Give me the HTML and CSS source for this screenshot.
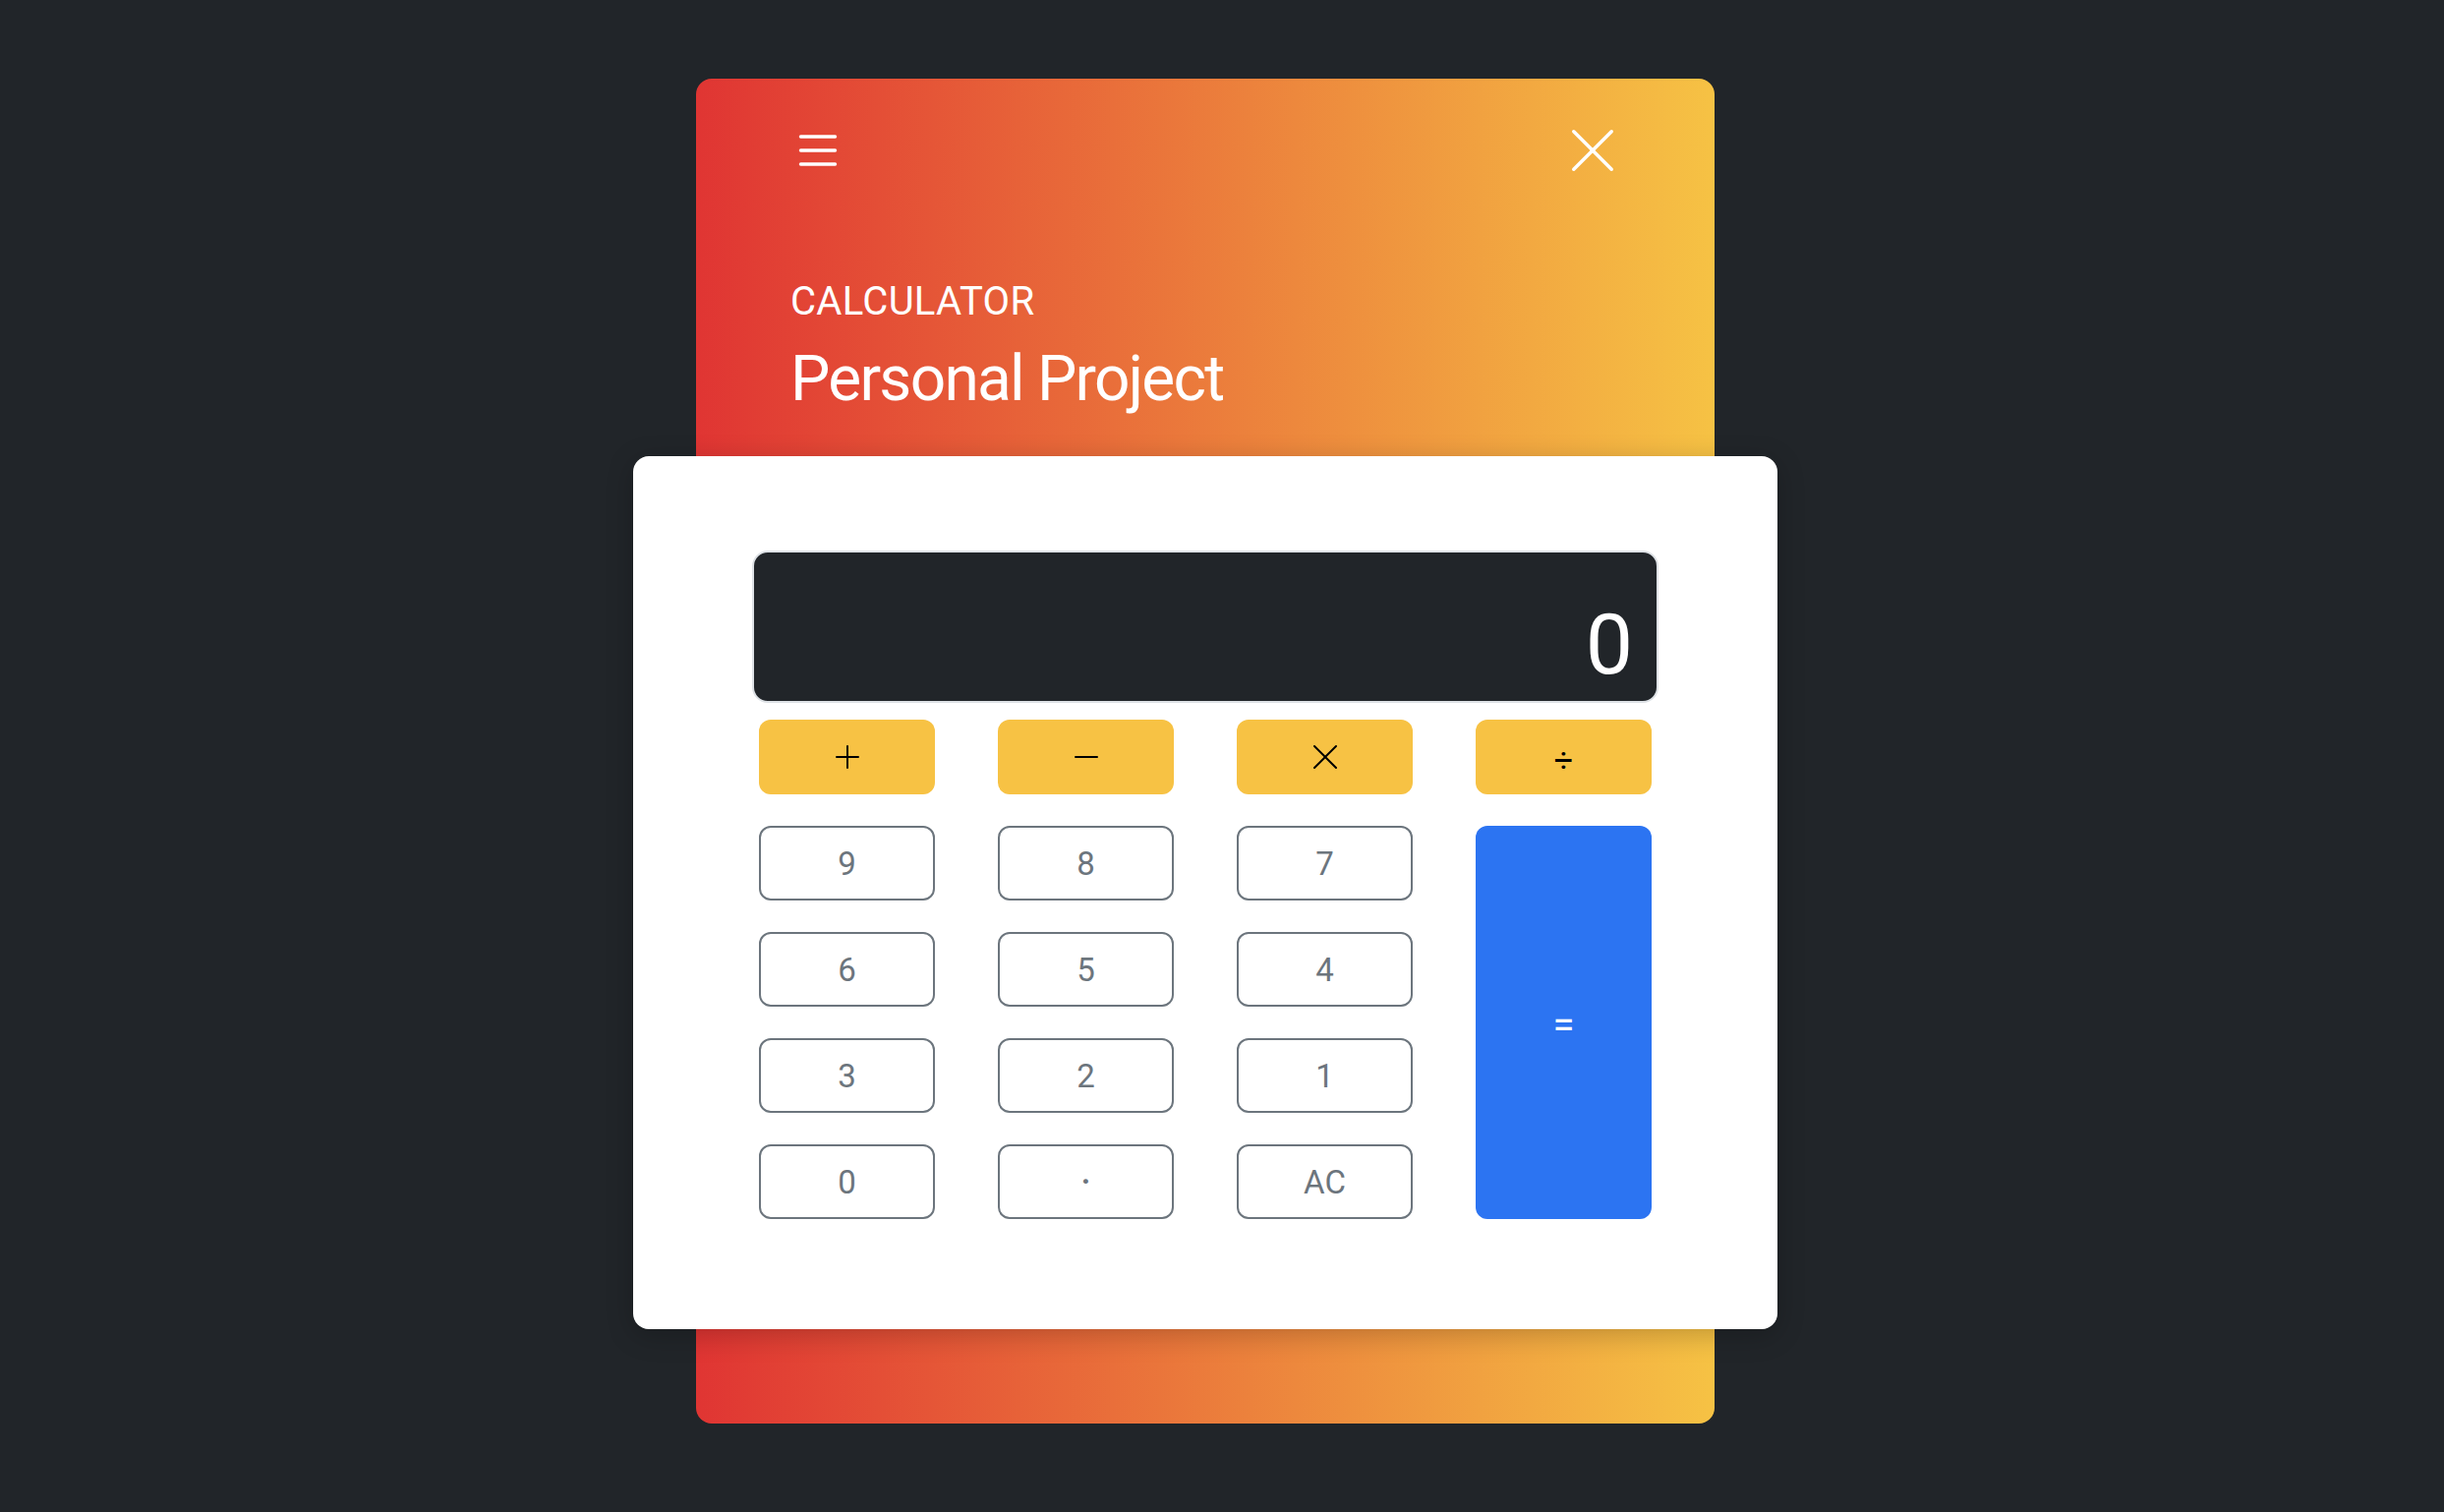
FILE: index.html
```html
<!DOCTYPE html>
<html lang="en">
<head>
<meta charset="utf-8">
<title>Calculator - Personal Project</title>
<link rel="stylesheet" href="styles.css">
</head>
<body>
<div class="stage">
  <section class="panel">
    <header class="hero">
      <div class="hero-bar">
        <svg class="hero-icon" viewBox="0 0 16 16" aria-label="Menu"><path d="M2.5 12a.5.5 0 0 1 .5-.5h10a.5.5 0 0 1 0 1H3a.5.5 0 0 1-.5-.5m0-4a.5.5 0 0 1 .5-.5h10a.5.5 0 0 1 0 1H3a.5.5 0 0 1-.5-.5m0-4a.5.5 0 0 1 .5-.5h10a.5.5 0 0 1 0 1H3a.5.5 0 0 1-.5-.5"/></svg>
        <svg class="hero-icon" viewBox="0 0 16 16" aria-label="Close"><path d="M2.146 2.854a.5.5 0 1 1 .708-.708L8 7.293l5.146-5.147a.5.5 0 0 1 .708.708L8.707 8l5.147 5.146a.5.5 0 0 1-.708.708L8 8.707l-5.146 5.147a.5.5 0 0 1-.708-.708L7.293 8z"/></svg>
      </div>
      <h5 class="eyebrow">CALCULATOR</h5>
      <h2 class="title">Personal Project</h2>
    </header>

    <div class="calc">
      <div class="screen"><span class="screen-value">0</span></div>
      <div class="keys">
        <button class="key op"><svg viewBox="0 0 16 16"><path d="M8 2a.5.5 0 0 1 .5.5v5h5a.5.5 0 0 1 0 1h-5v5a.5.5 0 0 1-1 0v-5h-5a.5.5 0 0 1 0-1h5v-5A.5.5 0 0 1 8 2"/></svg></button>
        <button class="key op"><svg viewBox="0 0 16 16"><path d="M2 8a.5.5 0 0 1 .5-.5h11a.5.5 0 0 1 0 1h-11A.5.5 0 0 1 2 8"/></svg></button>
        <button class="key op"><svg viewBox="0 0 16 16"><path d="M2.146 2.854a.5.5 0 1 1 .708-.708L8 7.293l5.146-5.147a.5.5 0 0 1 .708.708L8.707 8l5.147 5.146a.5.5 0 0 1-.708.708L8 8.707l-5.146 5.147a.5.5 0 0 1-.708-.708L7.293 8z"/></svg></button>
        <button class="key op op-text">÷</button>

        <button class="key num">9</button>
        <button class="key num">8</button>
        <button class="key num">7</button>
        <button class="key equals">=</button>

        <button class="key num">6</button>
        <button class="key num">5</button>
        <button class="key num">4</button>

        <button class="key num">3</button>
        <button class="key num">2</button>
        <button class="key num">1</button>

        <button class="key num">0</button>
        <button class="key num dot">·</button>
        <button class="key num">AC</button>
      </div>
    </div>

    <div class="panel-foot"></div>
  </section>
</div>
</body>
</html>
```
FILE: styles.css
```css
* { box-sizing: border-box; }

html, body {
  margin: 0;
  padding: 0;
}

body {
  background: #212529;
  min-height: 100vh;
  font-family: Roboto, "Liberation Sans", Arial, sans-serif;
  color: #212529;
}

.stage {
  padding: 80px 0 90px 708px;
}

.panel {
  width: 1036px;
  border-radius: 16px;
  background: linear-gradient(to right, #e03533 0%, #f6c244 100%);
}

.hero {
  padding: 45px 96px 40px 96px;
  color: #fff;
}

.hero-bar {
  display: flex;
  justify-content: space-between;
  align-items: center;
  height: 56px;
  margin-bottom: 102px;
}

.hero-icon {
  width: 56px;
  height: 56px;
  fill: #fff;
  display: block;
}

.eyebrow {
  margin: 0 0 16px 0;
  font-size: 40px;
  line-height: 48px;
  font-weight: 400;
  letter-spacing: 0.3px;
}

.title {
  margin: 0;
  font-size: 64px;
  line-height: 77px;
  font-weight: 400;
  letter-spacing: -1.75px;
}

.calc {
  margin: 0 -64px;
  background: #fff;
  border-radius: 16px;
  padding: 96px 121px 112px;
  box-shadow: 0 6px 28px rgba(0, 0, 0, 0.22);
  position: relative;
}

.screen {
  height: 155px;
  background: #212529;
  border: 2px solid #dee2e6;
  border-radius: 16px;
  display: flex;
  justify-content: flex-end;
  align-items: flex-end;
  padding: 0 24px 14px 0;
}

.screen-value {
  color: #fff;
  font-size: 86px;
  line-height: 86px;
  font-weight: 400;
}

.keys {
  margin-top: 17px;
  padding: 0 7px;
  display: grid;
  grid-template-columns: repeat(4, 179px);
  grid-auto-rows: 76px;
  column-gap: 64px;
  row-gap: 32px;
}

.key {
  margin: 0;
  border-radius: 12px;
  font-family: Roboto, "Liberation Sans", Arial, sans-serif;
  font-size: 33px;
  line-height: 1;
  display: flex;
  align-items: center;
  justify-content: center;
  padding: 0;
  cursor: pointer;
}

.op {
  background: #f7c244;
  border: 0;
  color: #000;
}

.op svg {
  width: 32px;
  height: 32px;
  fill: #000;
  display: block;
}

.op-text {
  font-size: 34px;
  padding-top: 5px;
}

.num {
  background: #fff;
  border: 2px solid #6c757d;
  color: #6c757d;
}

.dot {
  font-size: 44px;
  padding-top: 2px;
}

.equals {
  grid-column: 4;
  grid-row: 2 / span 4;
  background: #2c74f2;
  border: 0;
  color: #fff;
  font-size: 40px;
  padding-top: 6px;
}

.panel-foot {
  height: 96px;
}
```
